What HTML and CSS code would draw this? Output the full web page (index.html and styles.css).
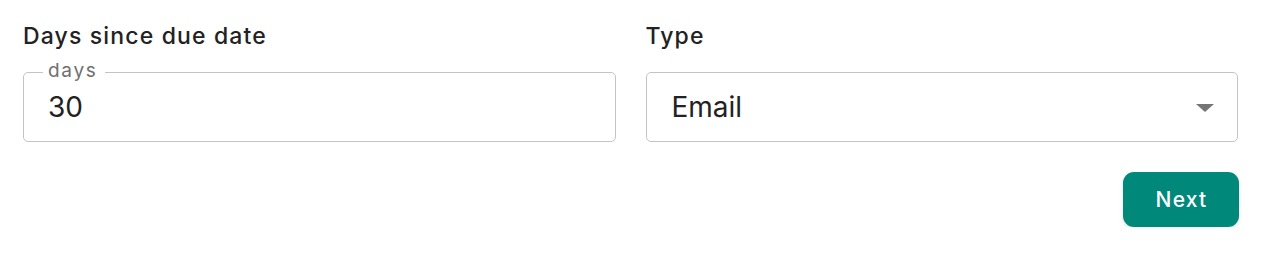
FILE: index.html
```html
<!DOCTYPE html>
<html>
<head>
<meta charset="utf-8">
<link rel="stylesheet" href="styles.css">
</head>
<body>
<div class="form">
  <div class="fields">
    <div class="field">
      <div class="label">Days since due date</div>
      <fieldset class="outlined">
        <legend class="legend">days</legend>
        <div class="value">30</div>
      </fieldset>
    </div>
    <div class="field">
      <div class="label">Type</div>
      <div class="select">
        <span class="value">Email</span>
        <svg class="caret" width="18" height="8" viewBox="0 0 18 8"><path d="M0 0 L18 0 L9 8 Z" fill="#757575"/></svg>
      </div>
    </div>
  </div>
  <div class="actions">
    <button class="btn">Next</button>
  </div>
</div>
</body>
</html>
```
FILE: styles.css
```css
html, body {
  margin: 0;
  padding: 0;
  background: #fff;
}
body {
  font-family: Inter, "Noto Sans", sans-serif;
  color: #222;
}
.form {
  padding: 22px 28px 0 23px;
}
.fields {
  display: grid;
  grid-template-columns: 1fr 1fr;
  column-gap: 30px;
}
.field {
  display: flex;
  flex-direction: column;
}
.label {
  font-size: 23px;
  font-weight: 500;
  line-height: 28px;
  letter-spacing: 1.15px;
  color: #222;
  margin-bottom: 12px;
}
.outlined {
  margin: 0;
  padding: 0;
  border: 1px solid #c4c4c4;
  border-radius: 5px;
  min-width: 0;
}
.legend {
  margin-left: 19px;
  padding: 0 7px 2px 5px;
  font-size: 19px;
  line-height: 18px;
  letter-spacing: 1.7px;
  color: #6f6f6f;
}
.outlined .value {
  font-size: 28px;
  line-height: 30px;
  padding: 10px 24px 19px 24px;
  color: #222;
}
.select {
  margin-top: 10px;
  height: 70px;
  box-sizing: border-box;
  border: 1px solid #c4c4c4;
  border-radius: 5px;
  display: flex;
  align-items: center;
  justify-content: space-between;
  padding: 0 23px 0 25px;
}
.select .value {
  font-size: 28px;
  line-height: 30px;
  color: #222;
}
.caret {
  display: block;
  margin-top: 1px;
}
.actions {
  display: flex;
  justify-content: flex-end;
  margin-top: 30px;
  margin-right: -1px;
}
.btn {
  font-family: Inter, "Noto Sans", sans-serif;
  width: 116px;
  height: 55px;
  border: none;
  border-radius: 11px;
  background: #00897b;
  color: #fff;
  font-size: 21px;
  font-weight: 500;
  letter-spacing: 1.2px;
  padding: 0 0 0 1px;
  box-shadow: 0 2px 4px rgba(0,0,0,0.12);
  cursor: pointer;
}
```
